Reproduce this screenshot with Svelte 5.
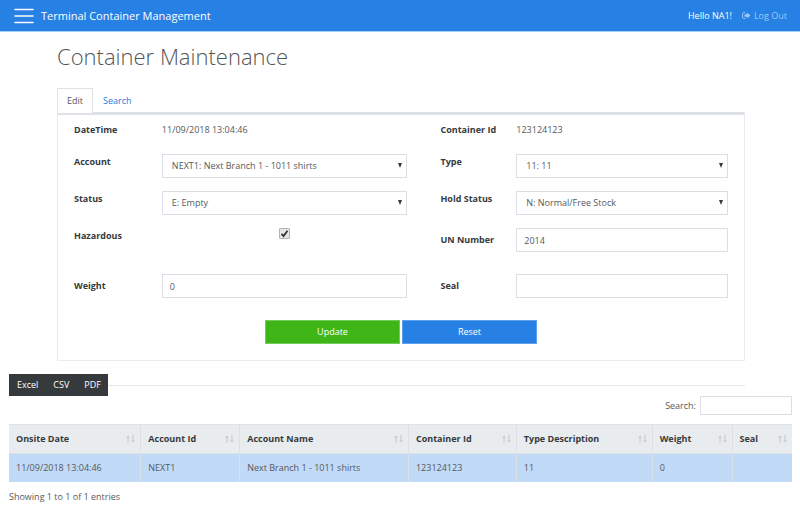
<script lang="ts">
    let form = $state({
        account: "NEXT1: Next Branch 1 - 1011 shirts",
        type: "11: 11",
        status: "E: Empty",
        holdStatus: "N: Normal/Free Stock",
        hazardous: true,
        unNumber: "2014",
        weight: "0",
        seal: "",
    });

    let query = $state("");

    const columns = [
        { label: "Onsite Date", width: 132 },
        { label: "Account Id", width: 99 },
        { label: "Account Name", width: 169 },
        { label: "Container Id", width: 108 },
        { label: "Type Description", width: 136 },
        { label: "Weight", width: 80 },
        { label: "Seal", width: 60 },
    ];
    const totalWidth = columns.reduce((sum, c) => sum + c.width, 0);

    const rows = [
        ["11/09/2018 13:04:46", "NEXT1", "Next Branch 1 - 1011 shirts", "123124123", "11", "0", ""],
    ];
</script>

<header class="navbar">
    <button class="menu" type="button" aria-label="Menu">
        <svg viewBox="0 0 20 16" width="20" height="16" aria-hidden="true">
            <path d="M1 1.5h18M1 8h18M1 14.5h18" stroke="#fff" stroke-width="1.6" stroke-linecap="round" />
        </svg>
    </button>
    <a class="brand" href="/">Terminal Container Management</a>
    <span class="hello">Hello NA1!</span>
    <a class="logout" href="/logout">
        <svg viewBox="0 0 18 14" width="9" height="7" aria-hidden="true">
            <path d="M7 1.2H3.5A2.3 2.3 0 0 0 1.2 3.5v7a2.3 2.3 0 0 0 2.3 2.3H7" fill="none" stroke="currentColor" stroke-width="2" />
            <path d="M10 1l7 6-7 6V9.5H5v-5h5z" fill="currentColor" />
        </svg>
        Log Out
    </a>
</header>

<main class="container">
    <h1>Container Maintenance</h1>

    <nav class="tabs">
        <a class="tab active" href="#edit">Edit</a>
        <a class="tab" href="#search">Search</a>
    </nav>

    <form class="panel" id="edit">
        <div class="row info">
            <span class="label">DateTime</span>
            <span>11/09/2018 13:04:46</span>
            <span class="label second">Container Id</span>
            <span>123124123</span>
        </div>
        <div class="row">
            <label class="label" for="account">Account</label>
            <select id="account" bind:value={form.account}>
                <option>NEXT1: Next Branch 1 - 1011 shirts</option>
            </select>
            <label class="label second" for="type">Type</label>
            <select id="type" bind:value={form.type}>
                <option>11: 11</option>
            </select>
        </div>
        <div class="row">
            <label class="label" for="status">Status</label>
            <select id="status" bind:value={form.status}>
                <option>E: Empty</option>
            </select>
            <label class="label second" for="hold">Hold Status</label>
            <select id="hold" bind:value={form.holdStatus}>
                <option>N: Normal/Free Stock</option>
            </select>
        </div>
        <div class="row spaced">
            <label class="label" for="hazardous">Hazardous</label>
            <input id="hazardous" type="checkbox" bind:checked={form.hazardous} />
            <label class="label second middle" for="un">UN Number</label>
            <input id="un" type="text" bind:value={form.unNumber} />
        </div>
        <div class="row spaced">
            <label class="label middle" for="weight">Weight</label>
            <input id="weight" type="text" bind:value={form.weight} />
            <label class="label second middle" for="seal">Seal</label>
            <input id="seal" type="text" bind:value={form.seal} />
        </div>
        <div class="actions">
            <button class="update" type="button">Update</button>
            <button class="reset" type="button">Reset</button>
        </div>
    </form>
</main>

<section class="results">
    <div class="toolbar">
        <div class="exports">
            <button type="button">Excel</button>
            <button type="button">CSV</button>
            <button type="button">PDF</button>
        </div>
        <hr />
    </div>

    <div class="filter">
        <label for="filter">Search:</label>
        <input id="filter" type="text" bind:value={query} />
    </div>

    <table>
        <colgroup>
            {#each columns as col}
                <col style="width: {(col.width / totalWidth) * 100}%" />
            {/each}
        </colgroup>
        <thead>
            <tr>
                {#each columns as col}
                    <th scope="col">
                        <span class="head">
                            {col.label}
                            <svg viewBox="0 0 9 8" width="9" height="8" aria-hidden="true">
                                <path d="M2 8V1M.5 2.5L2 1l1.5 1.5M7 0v7M5.5 5.5L7 7l1.5-1.5" fill="none" stroke="#c3c6c9" />
                            </svg>
                        </span>
                    </th>
                {/each}
            </tr>
        </thead>
        <tbody>
            {#each rows as row}
                <tr>
                    {#each row as cell}
                        <td>{cell}</td>
                    {/each}
                </tr>
            {/each}
        </tbody>
    </table>

    <p class="summary">Showing 1 to 1 of 1 entries</p>
</section>

<style>
    :global(body) {
        margin: 0;
        background: #fff;
        color: #55595c;
        font-family: "Open Sans", "Noto Sans", sans-serif;
        font-size: 9px;
        line-height: 14px;
    }

    button,
    input,
    select {
        box-sizing: border-box;
        margin: 0;
        border-radius: 0;
        font: inherit;
    }

    a {
        text-decoration: none;
    }

    .navbar {
        display: flex;
        align-items: center;
        height: 32px;
        padding: 0 13px 0 14px;
        background: #2780e3;
        border-bottom: 1px solid #a9cdf4;
        box-sizing: border-box;
        color: #fff;
    }

    .menu {
        display: flex;
        padding: 0;
        border: 0;
        background: none;
    }

    .brand {
        margin: 0 auto 0 7px;
        color: #fff;
        font-size: 11px;
    }

    .hello {
        margin-right: 10px;
    }

    .logout {
        display: flex;
        align-items: center;
        gap: 3px;
        color: #9fc7f3;
    }

    .container {
        padding: 0 55px 0 57px;
    }

    h1 {
        margin: 8px 0 16px;
        color: #555;
        font-size: 22px;
        font-weight: 300;
        line-height: 32px;
    }

    .tabs {
        display: flex;
        margin-bottom: -1px;
    }

    .tab {
        padding: 5px 9px;
        border: 1px solid transparent;
        border-bottom: 0;
        color: #2780e3;
    }

    .tab.active {
        position: relative;
        border-color: #dee2e6;
        background: #fff;
        color: #55595c;
    }

    .panel {
        padding: 8px 16px 16px;
        border: 1px solid #e9ecef;
        border-top: 3px solid #dee2e6;
    }

    .row {
        display: grid;
        grid-template-columns: 88fr 246fr 109fr 212fr;
        align-items: start;
        margin-bottom: 13px;
    }

    .row.info {
        margin-bottom: 17px;
    }

    .row.spaced {
        margin-bottom: 22px;
    }

    .label {
        padding-top: 1px;
        color: #373a3c;
        font-weight: 700;
    }

    .row.info .label {
        padding-top: 0;
    }

    .label.second {
        padding-left: 33px;
    }

    .label.middle {
        align-self: center;
        padding-top: 0;
    }

    input[type="text"],
    select {
        min-width: 0;
        width: 100%;
        height: 24px;
        padding: 0 7px;
        border: 1px solid #dbdfe5;
        background: #fff;
        color: #55595c;
    }

    select {
        appearance: none;
        padding: 0 18px 0 9px;
        background: #fff url("data:image/svg+xml,%3Csvg xmlns='http://www.w3.org/2000/svg' viewBox='0 0 4 5'%3E%3Cpath d='M0 0h4L2 5z' fill='%23373a3c'/%3E%3C/svg%3E") no-repeat right 4px top 8px / 4px 5px;
    }

    input[type="checkbox"] {
        appearance: none;
        justify-self: center;
        width: 11px;
        height: 11px;
        border: 1px solid #b5b5b5;
        border-radius: 1px;
        background: #e6e6e6;
    }

    input[type="checkbox"]:checked {
        background: #e6e6e6 url("data:image/svg+xml,%3Csvg xmlns='http://www.w3.org/2000/svg' viewBox='0 0 9 9'%3E%3Cpath d='M1.5 4.8L3.6 7 7.5 1.8' fill='none' stroke='%23333' stroke-width='1.8'/%3E%3C/svg%3E") no-repeat center / 9px 9px;
    }

    .actions {
        display: grid;
        grid-template-columns: repeat(2, minmax(0, 135px));
        justify-content: center;
        gap: 2px;
    }

    .actions button {
        height: 24px;
        padding: 0;
        border: 1px solid #5d9fea;
        background: #2780e3;
        color: #fff;
    }

    .actions .update {
        border-color: #74cc57;
        background: #3fb618;
    }

    .results {
        padding: 13px 8px 0 9px;
    }

    .toolbar {
        display: flex;
        align-items: center;
        padding-right: 47px;
    }

    .toolbar hr {
        flex: 1;
        margin: 0;
        border: 0;
        border-top: 1px solid #e6e8ea;
    }

    .exports {
        display: flex;
        background: #373a3c;
    }

    .exports button {
        height: 22px;
        padding: 0 7px 0 8px;
        border: 0;
        background: none;
        color: #fff;
    }

    .filter {
        display: flex;
        justify-content: flex-end;
        align-items: center;
        gap: 4px;
        margin-bottom: 9px;
    }

    .filter input[type="text"] {
        width: 92px;
        height: 19px;
    }

    table {
        width: 100%;
        table-layout: fixed;
        border-collapse: collapse;
    }

    th,
    td {
        padding: 7px;
        border-left: 1px solid #dbe0e5;
        text-align: left;
    }

    th:first-child,
    td:first-child {
        border-left: 0;
    }

    th {
        border-top: 1px solid #dee2e6;
        border-bottom: 1px solid #dee2e6;
        background: #e9ecef;
        color: #373a3c;
    }

    td {
        height: 14px;
        background: #c1daf7;
    }

    .head {
        display: flex;
        justify-content: space-between;
        align-items: center;
        margin-right: -2px;
        white-space: nowrap;
    }

    .summary {
        margin: 8px 0;
    }
</style>
